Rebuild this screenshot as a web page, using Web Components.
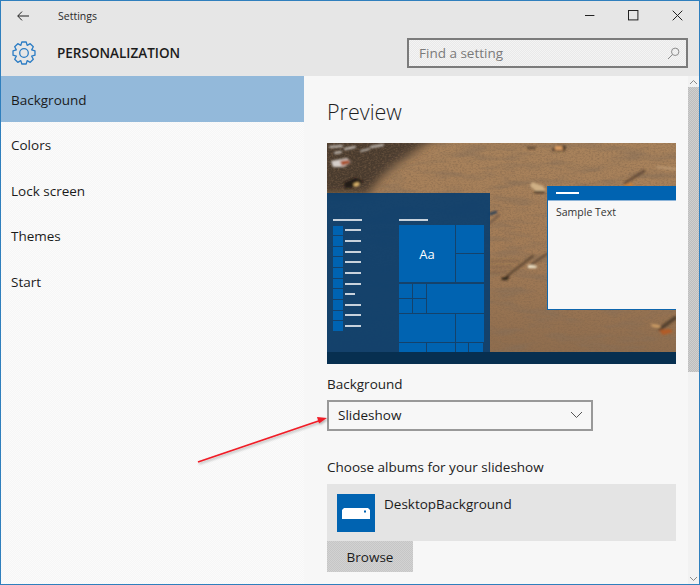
<!DOCTYPE html>
<html>
<head>
<meta charset="utf-8">
<title>Settings</title>
<style>
  html, body { margin: 0; padding: 0; background: #e6e6e6; }
  body { font-family: "Open Sans", "Liberation Sans", sans-serif; color: #1b1b1b; }
</style>
</head>
<body>
<settings-window>
  <title-bar slot="top">Settings</title-bar>
  <page-header slot="top" heading="PERSONALIZATION"></page-header>
  <nav-list slot="nav">
    <nav-item selected>Background</nav-item>
    <nav-item>Colors</nav-item>
    <nav-item>Lock screen</nav-item>
    <nav-item>Themes</nav-item>
    <nav-item>Start</nav-item>
  </nav-list>
  <background-page slot="main"></background-page>
  <scroll-bar slot="main"></scroll-bar>
  <red-arrow slot="over"></red-arrow>
</settings-window>

<script>
class SettingsWindow extends HTMLElement {
    connectedCallback() {
        this.attachShadow({ mode: 'open' });
        this.shadowRoot.innerHTML = `
            <style>
                :host {
                    display: flex;
                    flex-direction: column;
                    position: relative;
                    box-sizing: border-box;
                    width: 700px;
                    height: 585px;
                    border: 1px solid #2f7fbd;
                    background: #f7f7f7;
                    overflow: hidden;
                }
                .body { flex: 1; display: flex; min-height: 0; }
                .nav {
                    width: 303px;
                    flex: none;
                    background: repeating-conic-gradient(#fbfbfb 0 25%, #f6f6f6 0 50%) 0 0 / 2px 2px;
                }
                .main { flex: 1; display: flex; min-width: 0; background: #f7f7f7; }
            </style>
            <slot name="top"></slot>
            <div class="body">
                <div class="nav"><slot name="nav"></slot></div>
                <div class="main"><slot name="main"></slot></div>
            </div>
            <slot name="over"></slot>
        `;
    }
}
customElements.define('settings-window', SettingsWindow);

class TitleBar extends HTMLElement {
    connectedCallback() {
        this.attachShadow({ mode: 'open' });
        this.shadowRoot.innerHTML = `
            <style>
                :host {
                    display: flex;
                    align-items: center;
                    height: 29px;
                    background: #e6e6e6;
                    font-size: 10.5px;
                    color: #2a2a2a;
                }
                .back { width: 12px; height: 10px; margin-left: 16px; flex: none; }
                .text { margin-left: 29px; flex: 1; }
                .ctl { width: 43.7px; height: 29px; display: flex; align-items: center; justify-content: center; flex: none; }
                svg { display: block; }
            </style>
            <svg class="back" viewBox="0 0 12 10" fill="none" stroke="#222" stroke-width="1">
                <path d="M12 5H.9M5 .6.7 5 5 9.400"/>
            </svg>
            <div class="text"><slot></slot></div>
            <div class="ctl"><svg width="11" height="11" fill="none" stroke="#222" stroke-width="1"><path d="M1 5.500h9.400"/></svg></div>
            <div class="ctl"><svg width="11" height="11" fill="none" stroke="#222" stroke-width="1"><rect x=".5" y=".5" width="9.400" height="9.400"/></svg></div>
            <div class="ctl"><svg width="11" height="11" fill="none" stroke="#222" stroke-width="1"><path d="M.7.7l9.600 9.600M10.300.7.7 10.300"/></svg></div>
        `;
    }
}
customElements.define('title-bar', TitleBar);

// gear outline with 8 teeth, outer radius ro, root radius ri
function gearPath(cx, cy, ro, ri) {
    const pts = [];
    for (let i = 0; i < 8; i++) {
        const a = i * Math.PI / 4 - Math.PI / 2;
        const step = Math.PI / 8;
        [[ri, -step * 1.0], [ro, -step * 0.5], [ro, step * 0.5], [ri, step * 1.0]].forEach(([r, d]) => {
            pts.push((cx + r * Math.cos(a + d)).toFixed(2) + ' ' + (cy + r * Math.sin(a + d)).toFixed(2));
        });
    }
    return 'M' + pts.join('L') + 'Z';
}

class PageHeader extends HTMLElement {
    connectedCallback() {
        this.attachShadow({ mode: 'open' });
        this.shadowRoot.innerHTML = `
            <style>
                :host {
                    display: flex;
                    align-items: center;
                    height: 46px;
                    background: #e6e6e6;
                    padding: 0 11px;
                }
                svg { flex: none; display: block; }
                h1 {
                    margin: 0 0 0 21px;
                    flex: 1;
                    font-size: 13.5px;
                    font-weight: 600;
                    color: #1c1c1c;
                }
                .search {
                    box-sizing: border-box;
                    width: 281px;
                    height: 30px;
                    border: 2px solid #7b7b7b;
                    background: repeating-conic-gradient(#f4f4f4 0 25%, #e9e9e9 0 50%) 0 0 / 2px 2px;
                    display: flex;
                    align-items: center;
                    padding: 0 6px 0 10px;
                    font-size: 13.5px;
                    color: #7a7a7a;
                }
                .search span { flex: 1; }
            </style>
            <svg width="24" height="24" viewBox="0 0 24 24" fill="none" stroke="#2b7cc4" stroke-width="1.300" stroke-linejoin="round">
                <path d="${gearPath(12, 12, 11.2, 8.3)}"/>
                <circle cx="12" cy="12" r="4.300"/>
            </svg>
            <h1>${this.getAttribute('heading')}</h1>
            <div class="search">
                <span>Find a setting</span>
                <svg width="13" height="13" viewBox="0 0 13 13" fill="none" stroke="#8c8c8c" stroke-width="1">
                    <circle cx="8.200" cy="4.800" r="3.700"/><path d="M5.500 7.500 1 12"/>
                </svg>
            </div>
        `;
    }
}
customElements.define('page-header', PageHeader);

class NavList extends HTMLElement {
    connectedCallback() {
        this.attachShadow({ mode: 'open' });
        this.shadowRoot.innerHTML = `
            <style>:host { display: flex; flex-direction: column; }</style>
            <slot></slot>
        `;
    }
}
customElements.define('nav-list', NavList);

class NavItem extends HTMLElement {
    connectedCallback() {
        this.attachShadow({ mode: 'open' });
        this.shadowRoot.innerHTML = `
            <style>
                :host {
                    display: flex;
                    align-items: center;
                    box-sizing: border-box;
                    height: 45.5px;
                    padding: 2px 0 0 10px;
                    font-size: 13.5px;
                    color: #1b1b1b;
                }
                :host([selected]) { background: #93b9da; }
            </style>
            <slot></slot>
        `;
    }
}
customElements.define('nav-item', NavItem);

class ScrollBar extends HTMLElement {
    connectedCallback() {
        this.attachShadow({ mode: 'open' });
        this.shadowRoot.innerHTML = `
            <style>
                :host {
                    display: flex;
                    flex-direction: column;
                    width: 11px;
                    flex: none;
                    margin-left: auto;
                    background: #f2f2f2;
                }
                .btn { height: 11px; display: flex; align-items: center; justify-content: center; flex: none; }
                .thumb {
                    height: 285px;
                    flex: none;
                    background: repeating-conic-gradient(#cfcfcf 0 25%, #bdbdbd 0 50%) 0 0 / 2px 2px;
                }
                .rest { flex: 1; }
            </style>
            <div class="btn"><svg width="9" height="6" fill="none" stroke="#8a8a8a"><path d="M1 5l3.500-3.500L8 5"/></svg></div>
            <div class="thumb"></div>
            <div class="rest"></div>
            <div class="btn"><svg width="9" height="6" fill="none" stroke="#8a8a8a"><path d="M1 1l3.500 3.500L8 1"/></svg></div>
        `;
    }
}
customElements.define('scroll-bar', ScrollBar);

class BackgroundPage extends HTMLElement {
    connectedCallback() {
        this.attachShadow({ mode: 'open' });
        this.shadowRoot.innerHTML = `
            <style>
                :host {
                    display: block;
                    flex: 1;
                    min-width: 0;
                    padding: 0 12px 0 23px;
                    overflow: hidden;
                }
                h2 {
                    margin: 21px 0 16px;
                    height: 30px;
                    line-height: 30px;
                    font-size: 21.5px;
                    font-weight: 300;
                    color: #1f1f1f;
                }
                .label { font-size: 13.5px; height: 20px; line-height: 20px; color: #222; }
                .l1 { margin-top: 10px; }
                .l2 { margin-top: 26px; }
                .select {
                    box-sizing: border-box;
                    margin-top: 6px;
                    width: 266px;
                    height: 31px;
                    border: 2px solid #999;
                    display: flex;
                    align-items: center;
                    justify-content: space-between;
                    padding: 0 8px 2px 9px;
                    font-size: 13.5px;
                    color: #1b1b1b;
                }
                .album {
                    margin-top: 7px;
                    height: 57px;
                    background: #e4e4e4;
                    display: flex;
                    padding: 10px;
                    box-sizing: border-box;
                    gap: 9px;
                }
                .thumb {
                    width: 38px;
                    height: 38px;
                    background: #0063b1;
                    flex: none;
                    display: flex;
                    align-items: center;
                    justify-content: center;
                }
                .name { font-size: 13.5px; line-height: 20px; color: #1b1b1b; }
                .browse {
                    width: 86px;
                    height: 31px;
                    background: repeating-conic-gradient(#d2d2d2 0 25%, #c6c6c6 0 50%) 0 0 / 2px 2px;
                    display: flex;
                    align-items: center;
                    justify-content: center;
                    font-size: 13.5px;
                    color: #1b1b1b;
                }
                svg { display: block; }
            </style>
            <h2>Preview</h2>
            <desktop-preview></desktop-preview>
            <div class="label l1">Background</div>
            <div class="select">
                <span>Slideshow</span>
                <svg width="13" height="8" fill="none" stroke="#555" stroke-width="1"><path d="M1 1l5.500 5.500L12 1"/></svg>
            </div>
            <div class="label l2">Choose albums for your slideshow</div>
            <div class="album">
                <div class="thumb">
                    <svg width="28" height="11" viewBox="0 0 28 11"><path d="M2 0h24l2 2v9H0V2z" fill="#fff"/><rect x="22" y="2.500" width="2" height="2" fill="#0063b1"/></svg>
                </div>
                <div class="name">DesktopBackground</div>
            </div>
            <div class="browse">Browse</div>
        `;
    }
}
customElements.define('background-page', BackgroundPage);

class DesktopPreview extends HTMLElement {
    connectedCallback() {
        this.attachShadow({ mode: 'open' });
        const rows = [16, 16, 16, 16, 16, 16, 10, 16, 16, 16];
        const list = rows.map(w => `<div class="li"><i></i><b style="width:${w}px"></b></div>`).join('');
        this.shadowRoot.innerHTML = `
            <style>
                :host {
                    display: block;
                    position: relative;
                    width: 349px;
                    height: 221px;
                    overflow: hidden;
                    background: #9a7856;
                }
                .photo { position: absolute; inset: 0; display: block; }
                .start {
                    position: absolute;
                    left: 0;
                    top: 50px;
                    width: 163px;
                    height: 159px;
                    background: rgba(10, 62, 110, .92);
                    display: flex;
                    box-sizing: border-box;
                    padding: 26px 6px 0 6px;
                }
                .col1 { width: 66px; flex: none; }
                .col2 { width: 85px; flex: none; }
                .hd { height: 2px; width: 29px; background: #c8d2dc; margin-bottom: 4px; }
                .li { display: flex; align-items: center; height: 10.65px; }
                .li i { display: block; width: 10px; height: calc(100% - 1px); background: #0063b1; flex: none; }
                .li b { display: block; height: 2px; background: #c8d2dc; margin-left: 2px; }
                .taskbar {
                    position: absolute;
                    left: 0;
                    right: 0;
                    bottom: 0;
                    height: 12px;
                    background: #072f50;
                }
                .grid { display: grid; gap: 1px; width: 85px; }
                .grid div { background: #0063b1; }
                .g1 { grid-template-columns: 56px 28px; grid-template-rows: 28px 28px; }
                .aa {
                    grid-row: span 2;
                    display: flex;
                    align-items: center;
                    justify-content: center;
                    color: #fff;
                    font-size: 13px;
                }
                .g2 { grid-template-columns: 13px 13px 57px; grid-template-rows: 14px 14px; margin-top: 2px; }
                .g2 .w { grid-column: 3; grid-row: 1 / span 2; }
                .g3 { grid-template-columns: 56px 28px; grid-template-rows: 28px; margin-top: 1px; }
                .g4 { grid-template-columns: 27px 28px 12px 14px; grid-template-rows: 9px; margin-top: 1px; }
                .win {
                    position: absolute;
                    left: 220px;
                    top: 43px;
                    width: 129px;
                    height: 124px;
                    box-sizing: border-box;
                    background: #f7f7f7;
                    border-left: 1px solid #0f66ad;
                    border-bottom: 1px solid #0f66ad;
                }
                .bar { height: 14px; background: #0063b1; display: flex; align-items: center; padding-left: 8px; border-bottom: 1px solid #8db4d8; }
                .bar i { display: block; width: 23px; height: 2px; background: #fff; }
                .txt { font-size: 10.5px; line-height: 14px; margin: 4px 0 0 8px; color: #333; }
            </style>
            <svg class="photo" viewBox="0 0 349 221" preserveAspectRatio="none">
                <defs>
                    <linearGradient id="sand" x1="0" y1="0" x2="0" y2="1">
                        <stop offset="0" stop-color="#a9835c"/>
                        <stop offset=".5" stop-color="#a37c57"/>
                        <stop offset="1" stop-color="#8c6b4d"/>
                    </linearGradient>
                    <filter id="grain" x="0" y="0" width="100%" height="100%">
                        <feTurbulence type="fractalNoise" baseFrequency=".45 .7" numOctaves="2" seed="4"/>
                        <feColorMatrix values="0 0 0 0 .22  0 0 0 0 .13  0 0 0 0 .07  2.200 0 0 0 -.9"/>
                    </filter>
                    <filter id="mottle" x="0" y="0" width="100%" height="100%">
                        <feTurbulence type="fractalNoise" baseFrequency=".025 .11" numOctaves="3" seed="11"/>
                        <feColorMatrix values="0 0 0 0 .24  0 0 0 0 .16  0 0 0 0 .1  3 0 0 0 -1.350"/>
                    </filter>
                    <filter id="soft"><feGaussianBlur stdDeviation="5"/></filter>
                    <filter id="soft2"><feGaussianBlur stdDeviation=".8"/></filter>
                </defs>
                <rect width="349" height="221" fill="url(#sand)"/>
                <rect width="349" height="221" filter="url(#mottle)" opacity=".55"/>
                <path d="M-8-8H112L88 8 62 26 40 52H-8z" fill="#4a3a2f" filter="url(#soft)"/>
                <rect width="349" height="221" filter="url(#grain)" opacity=".55"/>
                <g filter="url(#soft2)" fill="none" stroke-linecap="round">
                    <path d="M3 4l12-1M18 6l10-2M34 8l8-2M44 4l12-2M8 10l6-1" stroke="#d0cac4" stroke-width="1.800"/>
                    <path d="M4 18l16-3 4 4-7 5H6z" fill="#d5cfcb"/>
                    <path d="M13 18l9-1 1 3-8 3z" fill="#a8502a"/>
                    <path d="M17 40l11-5 8 3-6 6-12 1z" fill="#241a13"/>
                    <path d="M26 41l5-2 2 3-5 2z" fill="#e0b86f"/>
                    <path d="M201 5h7" stroke="#3a2b20" stroke-width="1.500"/>
                    <path d="M225 6l6-4 8 1-1 5h-12z" fill="#4a382a"/>
                    <path d="M228 3h7l1 4h-8z" fill="#dc9e64"/>
                    <path d="M205 39l11 4 3 5-8 2-8-7z" fill="#cfb085"/>
                    <path d="M208 49l9 0" stroke="#2a1e15" stroke-width="2"/>
                    <path d="M298 40l19-12" stroke="#5c4634" stroke-width="3" opacity=".8"/>
                    <path d="M296 42l8-2 3 3h-9z" fill="#cc8036"/>
                    <path d="M330 24l19 2" stroke="#c3a27c" stroke-width="1.500"/>
                    <path d="M180 133l26-20" stroke="#57422f" stroke-width="2.500" opacity=".8"/>
                    <path d="M205 121l15-10" stroke="#5f4935" stroke-width="2.500" opacity=".8"/>
                    <path d="M201 122l9 1-1 2h-8z" fill="#f6eed4"/>
                    <path d="M174 135l9-2-3 4h-5z" fill="#2b2018"/>
                    <path d="M163 118h30M163 124h22M163 129h16" stroke="#6d5440" stroke-width=".8"/>
                    <path d="M333 186l15-11" stroke="#4a382a" stroke-width="4" opacity=".85"/>
                    <path d="M332 187l11-1 3 3-10 3z" fill="#b25c25"/>
                    <path d="M323 181l9 1 2 3-8-1z" fill="#d1a066"/>
                    <path d="M163 71l6-2" stroke="#2c3f55" stroke-width="2.500"/>
                    <path d="M172 72l-9 8" stroke="#7c604a" stroke-width="2.500"/>
                </g>
            </svg>
            <div class="taskbar"></div>
            <div class="start">
                <div class="col1">
                    <div class="hd"></div>
                    ${list}
                </div>
                <div class="col2">
                    <div class="hd"></div>
                    <div class="grid g1"><div class="aa">Aa</div><div></div><div></div></div>
                    <div class="grid g2"><div></div><div></div><div class="w"></div><div></div><div></div></div>
                    <div class="grid g3"><div></div><div></div></div>
                    <div class="grid g4"><div></div><div></div><div></div><div></div></div>
                </div>
            </div>
            <div class="win">
                <div class="bar"><i></i></div>
                <div class="txt">Sample Text</div>
            </div>
        `;
    }
}
customElements.define('desktop-preview', DesktopPreview);

class RedArrow extends HTMLElement {
    connectedCallback() {
        this.attachShadow({ mode: 'open' });
        this.shadowRoot.innerHTML = `
            <style>
                :host { position: absolute; left: -1px; top: -1px; display: block; pointer-events: none; }
                svg { display: block; }
            </style>
            <svg width="700" height="585" viewBox="0 0 700 585">
                <defs><filter id="sh" x="-10%" y="-30%" width="120%" height="160%"><feDropShadow dx="1" dy="1.500" stdDeviation="1" flood-color="#000" flood-opacity=".3"/></filter></defs>
                <g filter="url(#sh)">
                    <path d="M198 462 320 420.500" stroke="#f01c26" stroke-width="1.800" fill="none"/>
                    <path d="M327 418l-10-1 2 6.500z" fill="#f01c26"/>
                </g>
            </svg>
        `;
    }
}
customElements.define('red-arrow', RedArrow);
</script>
</body>
</html>
